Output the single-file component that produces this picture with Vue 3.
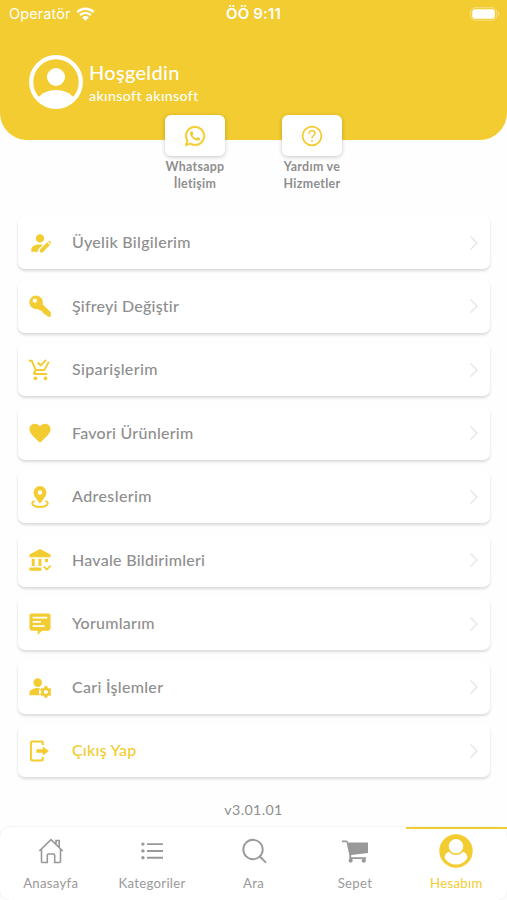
<template>
    <div class="screen">
        <header class="header">
            <div class="status-bar">
                <div class="operator">
                    <span>Operatör</span>
                    <svg class="wifi" viewBox="0 0 18 13">
                        <path d="M1.2 4.7a11.2 11.2 0 0 1 15.6 0M3.9 7.5a7.3 7.3 0 0 1 10.2 0" fill="none" stroke="#fff" stroke-width="2.3" />
                        <path d="M5.8 9.7a4.6 4.6 0 0 1 6.4 0L9 13z" fill="#fff" />
                    </svg>
                </div>
                <span class="clock">ÖÖ 9:11</span>
                <svg class="battery" viewBox="0 0 30 14">
                    <rect x=".7" y=".7" width="26" height="12.6" rx="4.4" fill="none" stroke="#fff" stroke-opacity=".4" />
                    <rect x="2.3" y="2.3" width="22.6" height="9.4" rx="2.8" fill="#fff" />
                    <path d="M28.2 5v4c1.6-.6 1.6-3.4 0-4z" fill="#fff" fill-opacity=".45" />
                </svg>
            </div>
            <div class="welcome">
                <svg class="avatar" viewBox="0 0 54 54">
                    <circle cx="27" cy="27" r="24.8" fill="none" stroke="#fff" stroke-width="4.2" />
                    <circle cx="27" cy="22" r="9" fill="#fff" />
                    <path d="M9 43c3.5-5 10.5-8 18-8s14.5 3 18 8a25 25 0 0 1-36 0z" fill="#fff" />
                </svg>
                <div>
                    <h1 class="hello">Hoşgeldin</h1>
                    <p class="user-name">akınsoft akınsoft</p>
                </div>
            </div>
        </header>

        <div class="shortcuts">
            <div class="shortcut">
                <div class="shortcut-box">
                    <svg viewBox="0 0 24 24">
                        <path d="M19.050 4.910A9.820 9.820 0 0 0 12.040 2c-5.460 0-9.910 4.450-9.910 9.910 0 1.750.46 3.450 1.320 4.950L2.050 22l5.250-1.380c1.450.79 3.080 1.210 4.740 1.210 5.460 0 9.910-4.450 9.910-9.910 0-2.650-1.030-5.140-2.900-7.010zm-7.010 15.240c-1.480 0-2.930-.4-4.200-1.150l-.3-.18-3.120.82.830-3.040-.2-.31a8.260 8.260 0 0 1-1.260-4.380c0-4.540 3.700-8.240 8.240-8.240 4.550 0 8.250 3.700 8.250 8.240.02 4.540-3.680 8.240-8.240 8.240z" stroke="currentColor" stroke-width=".4" />
                        <path d="M16.560 13.990c-.25-.12-1.470-.72-1.690-.81-.23-.08-.39-.12-.56.12-.17.25-.64.81-.78.97-.14.17-.29.19-.54.060-.25-.12-1.050-.39-1.990-1.230-.74-.66-1.230-1.470-1.380-1.720-.14-.25-.02-.38.11-.51.11-.11.25-.29.37-.43s.17-.25.25-.41c.08-.17.040-.31-.02-.43s-.56-1.340-.76-1.840c-.2-.48-.41-.42-.56-.43h-.48c-.17 0-.43.060-.66.31-.22.25-.86.85-.86 2.070s.89 2.400 1.010 2.560c.12.17 1.750 2.670 4.230 3.740 1.700.69 2.270.64 3.070.55.480-.1 1.470-.6 1.670-1.180.21-.58.21-1.070.14-1.180s-.22-.16-.47-.28z" />
                    </svg>
                </div>
                <p class="shortcut-text">Whatsapp<br>İletişim</p>
            </div>
            <div class="shortcut">
                <div class="shortcut-box">
                    <svg viewBox="0 0 24 24">
                        <circle cx="12" cy="12" r="9.4" fill="none" stroke="currentColor" stroke-width="1.8" />
                        <path d="M9.100 9.600c0-1.800 1.200-2.900 2.900-2.900s2.900 1.100 2.900 2.700c0 2.100-2.900 2.300-2.900 4.700" fill="none" stroke="currentColor" stroke-width="1.5" stroke-linecap="round" />
                        <circle cx="12" cy="17" r="1" />
                    </svg>
                </div>
                <p class="shortcut-text">Yardım ve<br>Hizmetler</p>
            </div>
        </div>

        <main class="menu">
            <div v-for="item in menu" :key="item.text" class="menu-item" :class="{ exit: item.exit }">
                <svg class="menu-icon" viewBox="0 0 24 24">
                    <path :d="item.icon" fill-rule="evenodd" />
                </svg>
                <span class="menu-text" :style="{ letterSpacing: item.spacing + 'px' }">{{ item.text }}</span>
                <svg class="arrow" viewBox="0 0 10 16">
                    <path d="M1.5 1.5L8 8l-6.5 6.5" />
                </svg>
            </div>
        </main>

        <p class="version">v3.01.01</p>

        <nav class="tab-bar">
            <div class="tab">
                <svg class="tab-icon" viewBox="0 0 26 26" fill="none" stroke="currentColor" stroke-width="1.6">
                    <path d="M1.3 13L13 1.700 24.700 13M3.500 11v12.500q0 1 1 1h4.800v-7.300q0-1.200 1.200-1.200h5q1.200 0 1.200 1.200v7.300h4.800q1 0 1-1V11M18 6V2.500h3.200V9" />
                </svg>
                <span>Anasayfa</span>
            </div>
            <div class="tab">
                <svg class="tab-icon" viewBox="0 0 26 26">
                    <path d="M8 5.200h16v1.900H8zM8 12h16v1.900H8zM8 18.800h16v1.900H8z" />
                    <circle cx="3.900" cy="6.100" r="1.700" />
                    <circle cx="3.900" cy="12.900" r="1.700" />
                    <circle cx="3.900" cy="19.700" r="1.700" />
                </svg>
                <span>Kategoriler</span>
            </div>
            <div class="tab">
                <svg class="tab-icon" viewBox="0 0 26 26" fill="none" stroke="currentColor" stroke-width="1.9">
                    <circle cx="12" cy="11.500" r="9.700" />
                    <path d="M18.800 18.500l5.700 5.700" stroke-linecap="round" />
                </svg>
                <span>Ara</span>
            </div>
            <div class="tab">
                <svg class="tab-icon" viewBox="0 0 26 26">
                    <path d="M0 2.500h4.500q1 0 1.300 1.200L6.100 4.500h20v10.500L9.200 17v2.300h14.700v1.800h-.8a2 2 0 1 1-2.600 0H10a2 2 0 1 1-2.700 0V17L4.500 4.300H0z" />
                </svg>
                <span>Sepet</span>
            </div>
            <div class="tab active">
                <svg class="tab-icon account" viewBox="0 0 34 34">
                    <circle cx="17" cy="17" r="16.700" />
                    <path d="M5.600 24c.3-4 2.500-6.300 5-6.300h12.800c2.500 0 4.700 2.300 5 6.300-3 4.800-6.900 6.500-11.400 6.500S8.600 28.800 5.600 24z" fill="#fff" />
                    <circle cx="17" cy="12.300" r="8" fill="#fff" stroke="currentColor" stroke-width="1.600" />
                </svg>
                <span>Hesabım</span>
            </div>
        </nav>
    </div>
</template>

<script setup>
const menu = [
    {
        text: 'Üyelik Bilgilerim',
        spacing: 0.3,
        icon: 'M12 2.500a4.500 4.500 0 1 0 0 9 4.500 4.500 0 0 0 0-9zM2.500 21.500v-2.200c0-3.500 4-5.600 9-5.600 1.300 0 2.500.1 3.500.4L9.800 19.300v2.200zM11.800 22.300v-3l8-8 3 3-8 8zM20.800 10.300l.5-.5q.7-.6 1.300 0l1.600 1.600q.6.700 0 1.300l-.5.5z'
    },
    {
        text: 'Şifreyi Değiştir',
        spacing: 0.22,
        icon: 'M8 .5a7.500 7.500 0 1 0 2 14.700l2 1.900h2.300v2.200h2.100v2.100h1.800l2.200 2.200h3.400v-4.700l-9-8.700A7.500 7.500 0 0 0 8 .5zM6.300 3.700a2.400 2.400 0 1 1 0 4.800 2.400 2.400 0 0 1 0-4.800z'
    },
    {
        text: 'Siparişlerim',
        spacing: 0.35,
        icon: 'M0 .8h3.700l4.200 10h8.300l4.500-8.200 1.800 1-4.500 8.200q-.6 1.200-1.900 1.200H8.100l-1.300 2.300h13v2.200H6.600c-1.700 0-2.700-1.700-1.900-3.200l1.500-2.500L2.300 3H0zM10.200 3l2.500 2.500L18 .2l1.500 1.500-6.800 6.800-4-4zM7 19a2.100 2.100 0 1 0 0 4.200 2.100 2.100 0 0 0 0-4.200zM18 19a2.100 2.100 0 1 0 0 4.200 2.100 2.100 0 0 0 0-4.200z'
    },
    {
        text: 'Favori Ürünlerim',
        spacing: 0.26,
        icon: 'M12 22.500l-1.700-1.600C4.300 15.300.5 11.900.5 7.800.5 4.400 3.100 1.900 6.400 1.900c2.100 0 4.200 1 5.600 2.700 1.400-1.700 3.500-2.700 5.600-2.700 3.300 0 5.900 2.500 5.900 5.900 0 4.100-3.800 7.500-9.800 13.100z'
    },
    {
        text: 'Adreslerim',
        spacing: 0.4,
        icon: 'M12 0a7 7 0 0 0-7 7c0 4.500 4 7.500 7 12.500 3-5 7-8 7-12.500a7 7 0 0 0-7-7zM12 4.500a2.500 2.500 0 1 1 0 5 2.500 2.500 0 0 1 0-5zM5.800 15.500l1 1.800c-1.400.3-2.200.8-2.200 1.500 0 1.500 3.200 2.900 7.400 2.900s7.400-1.400 7.400-2.900c0-.7-.8-1.200-2.200-1.500l1-1.800c2 .6 3.300 1.800 3.300 3.300 0 3-4.200 5.200-9.500 5.200s-9.500-2.200-9.500-5.200c0-1.500 1.300-2.700 3.300-3.300z'
    },
    {
        text: 'Havale Bildirimleri',
        spacing: 0.27,
        icon: 'M12 0l11.500 6v3H.5V6zM3 10.500h3.200v8H3zM10.300 10.500h3.200v8h-3.200zM17.500 10.500h3.200v3.800h-3.200zM.5 20.300h13v3.400H.5zM15.300 19.600l1.400-1.400 2.700 2.700 3.500-3.500 1.400 1.400-4.900 4.900z'
    },
    {
        text: 'Yorumlarım',
        spacing: 0.25,
        icon: 'M2.800.5h18.400q2.300 0 2.300 2.300v14.200q0 2.300-2.300 2.300h-7L9.500 24v-4.700H2.800Q.5 19.300.5 17V2.800Q.5.5 2.800.5zM4 4.100v2h16v-2zM4 8.700v2h9v-2zM4 13.300v2h13v-2z'
    },
    {
        text: 'Cari İşlemler',
        spacing: 0.3,
        icon: 'M9.500 2.500a4.700 4.700 0 1 0 0 9.400 4.700 4.700 0 0 0 0-9.400zM.5 21v-2.200C.5 15 5 13.200 10 13.200l2 .1c-1.500 2.500-1.500 5.200-.2 7.700zM17 11h2.800l.5 1.800 1.200.7 1.800-.5 1.400 2.400-1.300 1.300v1.400l1.300 1.300-1.400 2.400-1.800-.5-1.200.7-.5 1.800H17l-.5-1.800-1.200-.7-1.800.5-1.400-2.400 1.300-1.300v-1.400l-1.300-1.300 1.400-2.400 1.800.5 1.200-.7zM18.400 15.200a2.200 2.200 0 1 0 0 4.400 2.200 2.200 0 0 0 0-4.400z'
    },
    {
        text: 'Çıkış Yap',
        spacing: 0.25,
        exit: true,
        icon: 'M3.500.5h10.200q2.500 0 2.500 2.500v2.500h-2.200V4q0-1.300-1.300-1.300H4.500Q3.200 2.700 3.200 4v16q0 1.300 1.300 1.300h8.200q1.300 0 1.300-1.300v-1.500h2.200V21q0 2.500-2.500 2.500H3.500Q1 23.500 1 21V3Q1 .5 3.500.5zM8 10.100h7V7l6.800 5-6.800 5v-3.100H8z'
    }
]
</script>

<style>
body {
    background: #fefefe;
}
</style>

<style scoped>
.screen {
    display: flex;
    flex-direction: column;
    height: 900px;
    overflow: hidden;
    background: #fefefe;
    color: #8e8e8e;
    font-family: Lato, "Noto Sans", sans-serif;
}

h1,
p {
    margin: 0;
}

.header {
    box-sizing: border-box;
    flex: none;
    height: 140px;
    background: #f2cc30;
    border-radius: 0 0 27px 27px;
    color: #fff;
}

.status-bar {
    display: grid;
    grid-template-columns: 1fr auto 1fr;
    align-items: center;
    height: 27px;
    padding: 0 7px 0 9px;
    font-family: Inter, sans-serif;
    font-size: 14.5px;
}

.operator {
    display: flex;
    align-items: center;
    gap: 5px;
}

.operator span {
    letter-spacing: 0.1px;
}

.wifi {
    width: 19px;
    height: 14px;
}

.clock {
    margin-right: 2px;
    font-size: 15px;
    font-weight: 600;
    letter-spacing: 0.15px;
}

.battery {
    justify-self: end;
    width: 30px;
    height: 14px;
}

.welcome {
    display: flex;
    align-items: center;
    gap: 6px;
    padding: 28px 29px 0;
}

.avatar {
    width: 54px;
    height: 54px;
}

.hello {
    margin-top: 2px;
    font-size: 20px;
    font-weight: 500;
    line-height: 24px;
    letter-spacing: 0.3px;
}

.user-name {
    font-size: 14.2px;
    font-weight: 500;
    line-height: 23px;
    letter-spacing: 0.36px;
}

.shortcuts {
    display: flex;
    flex: none;
    justify-content: center;
    gap: 57px;
    height: 100px;
    margin-top: -25px;
}

.shortcut {
    width: 60px;
}

.shortcut-box {
    display: flex;
    align-items: center;
    justify-content: center;
    height: 41px;
    border-radius: 6px;
    background: #fff;
    box-shadow: 0 1px 4px rgba(0, 0, 0, 0.22);
    color: #f2cc30;
}

.shortcut-box svg {
    width: 24px;
    height: 24px;
    fill: currentColor;
}

.shortcut-text {
    margin: 3px -10px 0;
    font-size: 12.4px;
    font-weight: 700;
    line-height: 16.5px;
    text-align: center;
    letter-spacing: 0.3px;
}

.menu {
    display: flex;
    flex: none;
    flex-direction: column;
    gap: 10.5px;
    padding: 1px 17px 0 18px;
}

.menu-item {
    display: flex;
    align-items: center;
    box-sizing: border-box;
    height: 53px;
    padding: 0 11px;
    border-radius: 7px;
    background: #fff;
    box-shadow: 0 2px 3px rgba(0, 0, 0, 0.14);
}

.menu-icon {
    width: 22px;
    height: 22px;
    margin-right: 21px;
    fill: #f2cc30;
}

.menu-text {
    flex: 1;
    padding-bottom: 2px;
    font-size: 16px;
    font-weight: 500;
}

.exit .menu-text {
    color: #f2cc30;
}

.arrow {
    width: 10px;
    height: 16px;
    fill: none;
    stroke: #e7e7e7;
    stroke-width: 1.5;
}

.version {
    flex: none;
    height: 50px;
    line-height: 65px;
    text-align: center;
    font-size: 14.2px;
    letter-spacing: 0.4px;
}

.tab-bar {
    display: flex;
    flex: 1;
    background: #fff;
    border-radius: 10px;
    box-shadow: 0 0 2px rgba(0, 0, 0, 0.13);
}

.tab {
    display: flex;
    flex: 1;
    flex-direction: column;
    align-items: center;
    box-sizing: border-box;
    padding-top: 9px;
    border-top: 2px solid transparent;
    color: #999;
    font-size: 13.2px;
    line-height: 18px;
    letter-spacing: 0.28px;
}

.tab-icon {
    width: 26px;
    height: 26px;
    margin-bottom: 10px;
}

.tab-icon:not([fill]) {
    fill: currentColor;
}

.active {
    padding-top: 5px;
    border-color: #f2cc30;
    color: #f2cc30;
}

.account {
    width: 34px;
    height: 34px;
    margin-bottom: 6px;
}
</style>
